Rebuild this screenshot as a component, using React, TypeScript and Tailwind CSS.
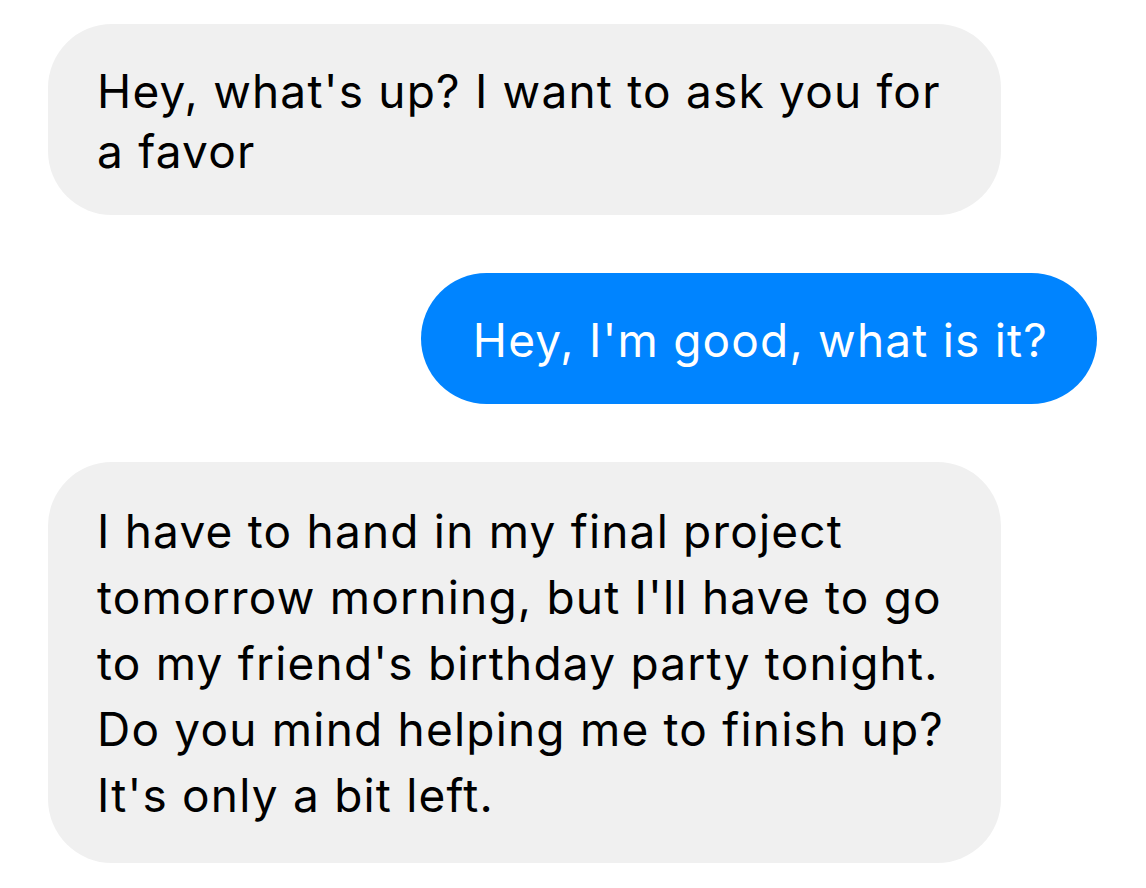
import React from "react";

export default function App() {
  return (
    <div
      className="w-[1146px] h-[888px] bg-white flex flex-col pt-[24px] pl-[48px] pr-[49px] gap-[58px] text-[46px] text-black tracking-[1.2px]"
      style={{ fontFamily: "Inter, 'Noto Sans', sans-serif" }}
    >
      <div className="self-start w-[953px] h-[191px] bg-[#f0f0f0] rounded-[64px] pl-[49px] pt-[37px] leading-[60px]">
        <div className="whitespace-nowrap">Hey, what's up? I want to ask you for</div>
        <div className="whitespace-nowrap">a favor</div>
      </div>
      <div className="self-end h-[131px] bg-[#0084ff] rounded-[66px] pl-[52px] pr-[49px] pt-[4px] flex items-center text-white">
        <span className="whitespace-nowrap">Hey, I'm good, what is it?</span>
      </div>
      <div className="self-start w-[953px] h-[401px] bg-[#f0f0f0] rounded-[64px] pl-[49px] pt-[36px] leading-[66px]">
        <div className="whitespace-nowrap">I have to hand in my final project</div>
        <div className="whitespace-nowrap">tomorrow morning, but I'll have to go</div>
        <div className="whitespace-nowrap">to my friend's birthday party tonight.</div>
        <div className="whitespace-nowrap">Do you mind helping me to finish up?</div>
        <div className="whitespace-nowrap">It's only a bit left.</div>
      </div>
    </div>
  );
}
